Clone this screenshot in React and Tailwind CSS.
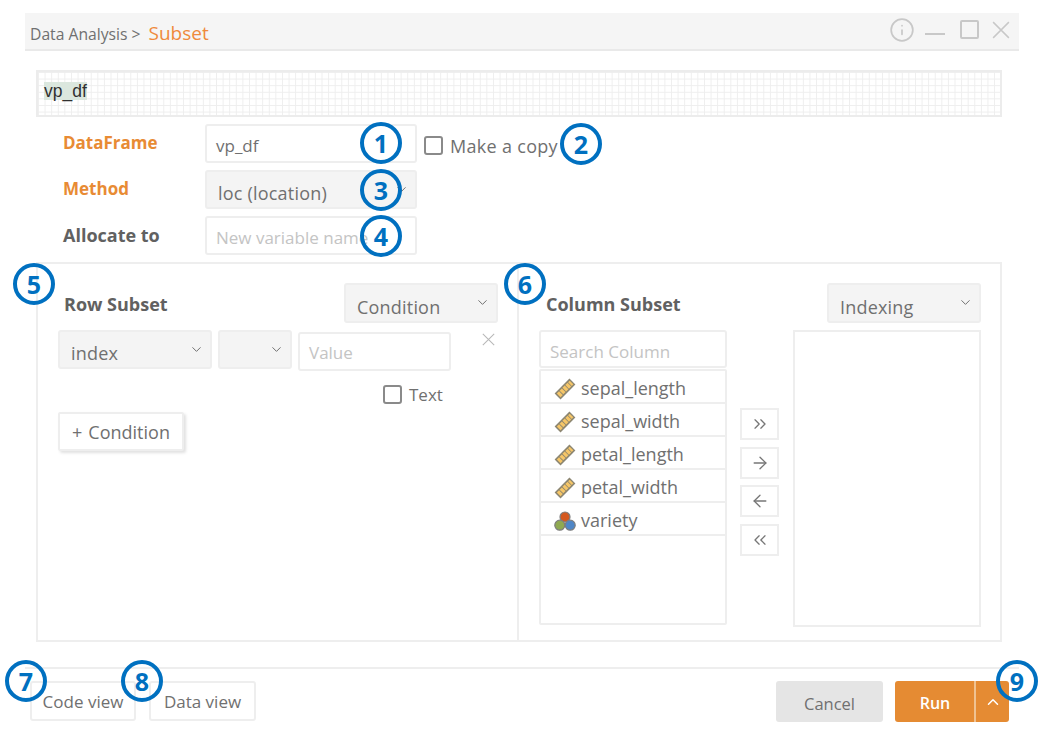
import { ArrowLeft, ArrowRight, ChevronDown, ChevronUp, ChevronsLeft, ChevronsRight, Info } from "lucide-react";

const BADGES = [
  { n: 1, x: 381, y: 143 },
  { n: 2, x: 581, y: 144 },
  { n: 3, x: 381, y: 190 },
  { n: 4, x: 381, y: 236 },
  { n: 5, x: 34, y: 284 },
  { n: 6, x: 525, y: 284 },
  { n: 7, x: 26, y: 681 },
  { n: 8, x: 142, y: 681 },
  { n: 9, x: 1017, y: 681 },
];

const COLUMNS = ["sepal_length", "sepal_width", "petal_length", "petal_width"];

function Badge({ n, x, y }) {
  return (
    <div
      className="absolute w-[42px] h-[42px] rounded-full border-[4px] border-[#0070c0] flex items-center justify-center text-[25px] font-bold leading-none text-[#0070c0]"
      style={{ left: x - 21, top: y - 21 }}
    >
      {n}
    </div>
  );
}

function XMark({ size, className }) {
  return (
    <svg width={size} height={size} viewBox="0 0 16 16" className={className}>
      <path d="M1 1L15 15M15 1L1 15" fill="none" stroke="currentColor" strokeWidth="1.3" />
    </svg>
  );
}

function Select({ label, className }) {
  return (
    <div className={`flex items-center justify-between rounded-[3px] border-2 border-[#eeeeee] bg-[#f4f4f4] pl-[11px] pr-[6px] text-[18px] tracking-[0.2px] text-[#707070] ${className}`}>
      <span className="pt-[8px]">{label}</span>
      <ChevronDown size={15} strokeWidth={1.5} className="text-[#666666] -mt-[1px]" />
    </div>
  );
}

// pt is passed in className, the text sits a little differently per field
function Field({ placeholder, value, className }) {
  return (
    <div className={`flex items-center rounded-[3px] border-2 border-[#eeeeee] bg-white pl-[9px] text-[17px] ${value ? "text-[#707070]" : "text-[#c4c4c4]"} ${className}`}>
      {value || placeholder}
    </div>
  );
}

function Checkbox({ className }) {
  return <span className={`w-[19px] h-[19px] rounded-[3px] border-2 border-[#8a8a8a] bg-white shrink-0 ${className}`} />;
}

function RulerIcon() {
  return (
    <svg width="22" height="22" viewBox="0 0 22 22" className="shrink-0">
      <g transform="rotate(-45 11 11)">
        <rect x="0.5" y="6.8" width="21" height="8.4" fill="#8c8672" />
        <rect x="2" y="8.4" width="3.2" height="5.2" fill="#f6c667" />
        <rect x="6" y="8.4" width="3.2" height="5.2" fill="#f6c667" />
        <rect x="10" y="8.4" width="3.2" height="5.2" fill="#f6c667" />
        <rect x="14" y="8.4" width="3.2" height="5.2" fill="#f6c667" />
        <rect x="18" y="8.4" width="2.2" height="5.2" fill="#f6c667" />
      </g>
    </svg>
  );
}

function CategoryIcon() {
  return (
    <svg width="22" height="22" viewBox="0 0 22 22" className="shrink-0">
      <circle cx="11" cy="7" r="5" fill="#d4581f" stroke="#7d7d7d" strokeWidth="1.2" />
      <circle cx="5.8" cy="15.2" r="5" fill="#8fa951" stroke="#7d7d7d" strokeWidth="1.2" />
      <circle cx="16.2" cy="15.2" r="5" fill="#4f86c6" stroke="#7d7d7d" strokeWidth="1.2" />
    </svg>
  );
}

function ColumnItem({ icon, label }) {
  return (
    <div className="h-[33px] shrink-0 flex items-center gap-[5px] pl-[13px] pt-[4px] border-b-2 border-[#eeeeee] text-[18px] text-[#707070]">
      {icon}
      <span>{label}</span>
    </div>
  );
}

function MoveButton({ children }) {
  return (
    <button className="w-[39px] h-[32px] flex items-center justify-center border-2 border-[#eeeeee] bg-white text-[#777777]">
      {children}
    </button>
  );
}

function FormRow({ label, orange, children }) {
  return (
    <div className="flex items-center h-[39px]">
      <div className={`w-[168px] pl-[26px] font-bold -mt-[1px] ${orange ? "text-[17px] text-[#e88b34]" : "text-[18px] text-[#616161]"}`}>{label}</div>
      {children}
    </div>
  );
}

export default function App() {
  return (
    <div
      className="relative w-[1043px] h-[734px] overflow-hidden bg-white"
      style={{ fontFamily: '"Open Sans", "Noto Sans", sans-serif' }}
    >
      <div className="pt-[13px] pl-[25px] pr-[24px]">
        <header className="h-[38px] flex items-center justify-between bg-[#f5f5f5] border-b-2 border-[#e9e9e9] pl-[5px] pr-[9px]">
          <div className="flex items-center pt-[8px]">
            <span className="text-[15.7px] text-[#707070]">Data Analysis &gt;</span>
            <span className="ml-[8px] -mt-[3px] text-[19px] text-[#ef8a3c]">Subset</span>
          </div>
          <div className="flex items-center text-[#c8c8c8] -mt-[3px]">
            <Info size={26} strokeWidth={1.6} />
            <span className="ml-[10px] w-[20px] h-[2px] bg-[#c8c8c8] mt-[8px]" />
            <span className="ml-[15px] w-[19px] h-[19px] rounded-[2px] border-2 border-[#c8c8c8]" />
            <XMark size={18} className="ml-[13px]" />
          </div>
        </header>
      </div>

      <div className="mt-[19px] ml-[36px] w-[966px] h-[47px] border-2 border-[#ececec] flex items-center pl-[6px] pb-[6px] bg-white bg-[linear-gradient(#eeeeee_1px,transparent_1px),linear-gradient(90deg,#eeeeee_1px,transparent_1px)] bg-[size:6.6px_6.6px]">
        <span className="bg-[#dbe7de] text-[17.5px] leading-[18px] text-[#303030]" style={{ fontFamily: '"Liberation Sans", sans-serif' }}>vp_df</span>
      </div>

      <div className="mt-[7px] ml-[37px] flex flex-col gap-[7px]">
        <FormRow label="DataFrame" orange>
          <Field value="vp_df" className="w-[212px] h-[39px] pt-[4px]" />
          <div className="ml-[7px] flex items-center gap-[7px] text-[18px] tracking-[0.3px] text-[#707070]">
            <Checkbox className="mt-[3px]" />
            <span className="pt-[6px]">Make a copy</span>
          </div>
        </FormRow>
        <FormRow label="Method" orange>
          <Select label="loc (location)" className="w-[212px] h-[39px]" />
        </FormRow>
        <FormRow label="Allocate to">
          <Field placeholder="New variable name" className="w-[212px] h-[39px] pt-[4px]" />
        </FormRow>
      </div>

      <div className="mt-[7px] ml-[36px] w-[966px] h-[380px] border-2 border-[#eeeeee] flex">
        <section className="w-[481px] h-full border-r-2 border-[#eeeeee] pl-[20px] pr-[19px] pt-[19px]">
          <div className="flex items-center justify-between h-[40px]">
            <h2 className="pl-[6px] pt-[3px] text-[18px] font-bold text-[#616161]">Row Subset</h2>
            <Select label="Condition" className="w-[154px] h-[40px]" />
          </div>
          <div className="mt-[7px] flex items-start gap-[6px]">
            <Select label="index" className="w-[154px] h-[39px]" />
            <Select label="" className="w-[74px] h-[39px]" />
            <Field placeholder="Value" className="w-[153px] h-[39px] mt-[2px] pt-[2px]" />
            <XMark size={13} className="ml-[25px] mt-[3px] text-[#b8b8b8]" />
          </div>
          <div className="mt-[11px] ml-[325px] flex items-center gap-[7px] text-[17px] text-[#707070]">
            <Checkbox />
            <span>Text</span>
          </div>
          <button className="mt-[4px] w-[126px] h-[39px] flex items-center justify-center gap-[6px] pt-[2px] rounded-[2px] border-2 border-[#eeeeee] bg-white text-[18px] text-[#707070] shadow-[2px_2px_3px_rgba(0,0,0,0.12)]">
            <span>+</span>
            <span>Condition</span>
          </button>
        </section>

        <section className="flex-1 h-full pt-[19px] pl-[20px]">
          <div className="flex items-center justify-between h-[40px] w-[442px]">
            <h2 className="pl-[7px] pt-[3px] text-[18px] font-bold text-[#616161]">Column Subset</h2>
            <Select label="Indexing" className="w-[154px] h-[40px]" />
          </div>
          <div className="mt-[7px] flex items-start">
            <div className="w-[188px] shrink-0">
              <Field placeholder="Search Column" className="w-full h-[38px] pt-[6px]" />
              <div className="mt-[1px] h-[256px] border-2 border-[#eeeeee] rounded-[2px] flex flex-col">
                {COLUMNS.map((c) => (
                  <ColumnItem key={c} icon={<RulerIcon />} label={c} />
                ))}
                <ColumnItem icon={<CategoryIcon />} label="variety" />
              </div>
            </div>
            <div className="ml-[13px] mt-[78px] flex flex-col gap-[6.5px]">
              <MoveButton><ChevronsRight size={20} strokeWidth={1.6} /></MoveButton>
              <MoveButton><ArrowRight size={20} strokeWidth={1.6} /></MoveButton>
              <MoveButton><ArrowLeft size={20} strokeWidth={1.6} /></MoveButton>
              <MoveButton><ChevronsLeft size={20} strokeWidth={1.6} /></MoveButton>
            </div>
            <div className="ml-[14px] w-[188px] h-[297px] border-2 border-[#eeeeee]" />
          </div>
        </section>
      </div>

      <footer className="mt-[25px] ml-[25px] mr-[24px] border-t-2 border-[#eeeeee] pt-[12px] pl-[5px] pr-[10px] flex items-start justify-between">
        <div className="flex gap-[13px]">
          <button className="w-[106px] h-[40px] pt-[2px] rounded-[3px] border-2 border-[#eeeeee] bg-white text-[17px] text-[#707070]">Code view</button>
          <button className="w-[107px] h-[40px] pt-[2px] rounded-[3px] border-2 border-[#eeeeee] bg-white text-[17px] text-[#707070]">Data view</button>
        </div>
        <div className="flex gap-[12px]">
          <button className="w-[107px] h-[41px] pt-[5px] rounded-[3px] bg-[#e5e5e5] text-[16.5px] text-[#707070]">Cancel</button>
          <div className="flex w-[114px] h-[41px] rounded-[3px] bg-[#e58b33] text-white text-[16px] font-semibold">
            <span className="w-[79px] pl-[1px] pt-[2px] flex items-center justify-center">Run</span>
            <span className="flex-1 border-l-2 border-[#f0c291] flex items-center justify-center">
              <ChevronUp size={18} strokeWidth={2} />
            </span>
          </div>
        </div>
      </footer>

      {BADGES.map((b) => (
        <Badge key={b.n} {...b} />
      ))}
    </div>
  );
}
